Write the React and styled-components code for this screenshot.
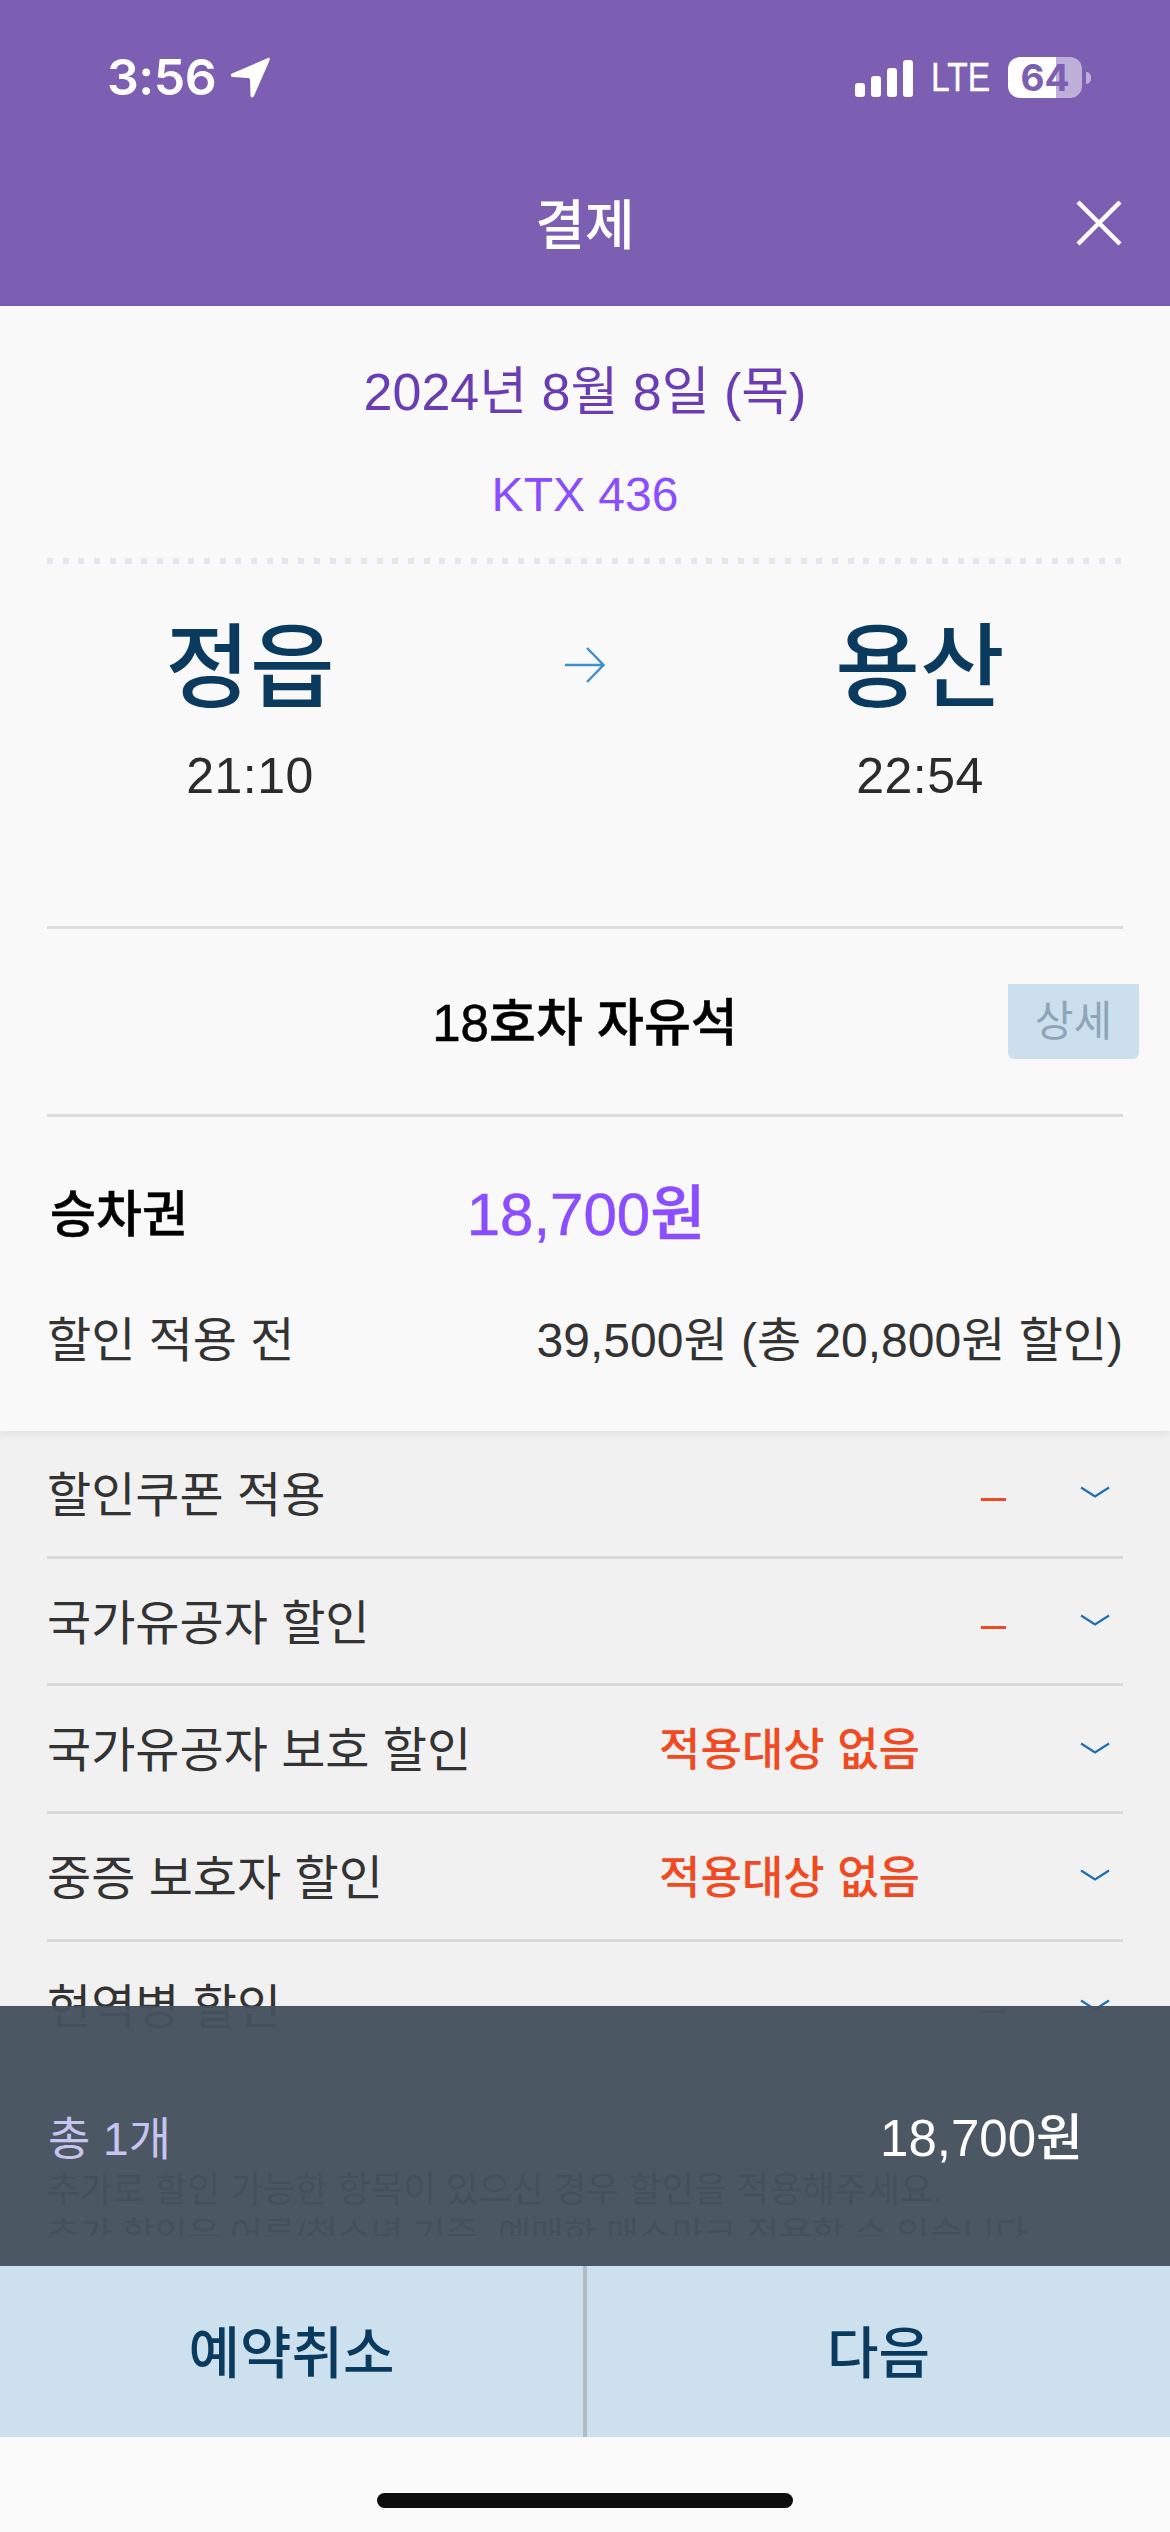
import React from "react";
import styled, { createGlobalStyle } from "styled-components";

const Global = createGlobalStyle`
  html, body { margin: 0; padding: 0; background: #f9f9f9; }
  * { box-sizing: border-box; }
  body { font-family: "Liberation Sans", "Noto Sans CJK KR", sans-serif; }
`;

const Page = styled.div`
  width: 1170px;
  height: 2532px;
  display: flex;
  flex-direction: column;
  overflow: hidden;
  background: #fafafa;
`;

const Header = styled.header`
  height: 306px;
  flex: none;
  background: #7c5eb2;
  color: #fff;
  display: flex;
  flex-direction: column;
`;

const StatusBar = styled.div`
  height: 186px;
  padding: 57px 79px 0 107px;
  display: flex;
  align-items: flex-start;
  justify-content: space-between;
`;

const StatusLeft = styled.div`
  display: flex;
  align-items: center;
  gap: 14px;
  height: 41px;
`;

const Clock = styled.span`
  font: 600 50px/41px Inter, sans-serif;
  letter-spacing: -0.5px;
`;

const StatusRight = styled.div`
  display: flex;
  align-items: center;
  height: 41px;
`;

const Signal = styled.div`
  display: flex;
  align-items: flex-end;
  gap: 6px;
  height: 37px;
  margin-top: 1px;
`;

const SignalBar = styled.span`
  width: 10px;
  height: ${(p) => p.$h}px;
  border-radius: 3px;
  background: #fff;
`;

const Network = styled.span`
  display: inline-block;
  width: 58px;
  margin: 0 19px 0 18px;
  font: 400 40px/41px "Liberation Sans", sans-serif;
  -webkit-text-stroke: 0.4px #fff;
  transform: scaleX(0.84);
  transform-origin: left center;
`;

const Battery = styled.div`
  width: 74px;
  height: 41px;
  border-radius: 12px;
  background: linear-gradient(to right, #fff 0 48px, rgba(255, 255, 255, 0.5) 48px);
  color: #7c5eb2;
  font: 700 37px/41px Inter, sans-serif;
  text-align: center;
`;

const BatteryCap = styled.span`
  width: 5px;
  height: 12px;
  margin-left: 4px;
  border-radius: 0 6px 6px 0;
  background: rgba(255, 255, 255, 0.5);
`;

const TitleBar = styled.div`
  height: 120px;
  position: relative;
  display: flex;
  align-items: flex-start;
  justify-content: center;
`;

const Title = styled.h1`
  margin: 0;
  font: 500 54px/66px "Liberation Sans", "Noto Sans CJK KR", sans-serif;
  padding-top: 7px;
`;

const Close = styled.svg`
  position: absolute;
  right: 48px;
  top: 14px;
  width: 46px;
  height: 46px;
`;

const Info = styled.section`
  flex: none;
  height: 1125px;
  background: #f9f9f9;
  padding: 56px 47px 0;
  position: relative;
  z-index: 1;
  box-shadow: 0 3px 8px rgba(0, 0, 0, 0.08);
`;

const DateLine = styled.div`
  font: 400 52px/60px "Liberation Sans", "Noto Sans CJK KR", sans-serif;
  color: #6a3db5;
  text-align: center;
`;

const TrainLine = styled.div`
  margin-top: 43px;
  font: 400 48px/60px "Liberation Sans", sans-serif;
  color: #8a4dff;
  text-align: center;
`;

const Dotted = styled.div`
  height: 6px;
  margin-top: ${(p) => p.$top}px;
  background: repeating-linear-gradient(to right, #e3e8f0 0 6px, transparent 6px 15.7px);
`;

const Route = styled.div`
  margin-top: 54px;
  display: grid;
  grid-template-columns: 406px 1fr 406px;
  align-items: start;
`;

const Stop = styled.div`
  display: flex;
  flex-direction: column;
  align-items: center;
  gap: 28px;
`;

const StationName = styled.div`
  font: 500 92px/100px "Liberation Sans", "Noto Sans CJK KR", sans-serif;
  color: #0a3a5e;
`;

const Time = styled.div`
  font: 400 50px/60px "Liberation Sans", sans-serif;
  letter-spacing: 0.5px;
  color: #2b2b2b;
`;

const ArrowWrap = styled.div`
  display: flex;
  justify-content: center;
  padding-top: 29px;
`;

const Rule = styled.div`
  height: 3px;
  background: #dcdcdc;
  margin-top: ${(p) => p.$top || 0}px;
`;

const SeatRow = styled.div`
  height: 185px;
  display: grid;
  grid-template-columns: 1fr auto 1fr;
  align-items: center;
`;

const SeatName = styled.div`
  grid-column: 2;
  font: 500 51px/60px "Liberation Sans", "Noto Sans CJK KR", sans-serif;
  -webkit-text-stroke: 0.5px #000;
  color: #000;
  padding-top: 4px;
`;

const DetailButton = styled.button`
  grid-column: 3;
  justify-self: end;
  width: 131px;
  height: 75px;
  margin: 0 -16px 0 0;
  padding: 0;
  border: 0;
  border-radius: 0 0 6px 6px;
  background: #cbdfed;
  color: #8ea5b8;
  font: 400 42px/75px "Liberation Sans", "Noto Sans CJK KR", sans-serif;
`;

const FareRow = styled.div`
  margin-top: 68px;
  display: grid;
  grid-template-columns: 1fr auto 1fr;
  align-items: center;
  height: 60px;
`;

const FareLabel = styled.div`
  font: 500 50px/60px "Liberation Sans", "Noto Sans CJK KR", sans-serif;
  -webkit-text-stroke: 0.5px #000;
  color: #000;
  padding-left: 3px;
`;

const FareAmount = styled.div`
  font: 500 60px/60px "Liberation Sans", "Noto Sans CJK KR", sans-serif;
  -webkit-text-stroke: 0.5px #8a4dff;
  color: #8a4dff;
  padding-left: 2px;
`;

const BeforeRow = styled.div`
  margin-top: 66px;
  height: 60px;
  display: flex;
  justify-content: space-between;
  align-items: center;
  color: #333;
  font: 400 48px/60px "Liberation Sans", "Noto Sans CJK KR", sans-serif;
`;

const Main = styled.main`
  flex: none;
  height: 835px;
  position: relative;
  background: #f1f1f1;
`;

const List = styled.div`
  height: 805px;
  padding: 0 47px;
  overflow: hidden;
`;

const Row = styled.div`
  height: 127.7px;
  display: flex;
  align-items: center;
  padding-top: 5px;
  border-bottom: ${(p) => (p.$last ? "0" : "3px solid #d9d9d9")};
`;

const RowLabel = styled.div`
  flex: 1;
  font: 400 48px/60px "Liberation Sans", "Noto Sans CJK KR", sans-serif;
  color: #333;
`;

const RowValue = styled.div`
  font: 500 45px/60px "Liberation Sans", "Noto Sans CJK KR", sans-serif;
  color: #f04a22;
  margin-right: ${(p) => (p.$dash ? 74 : 160)}px;
`;

const Chevron = styled.svg`
  flex: none;
  width: 30px;
  height: 12px;
  margin-right: 13px;
  margin-bottom: 7px;
`;

const Note = styled.p`
  margin: ${(p) => p.$top}px 0 0;
  font: 400 35.5px/52px "Liberation Sans", "Noto Sans CJK KR", sans-serif;
  color: #333;
  white-space: nowrap;
`;

const Summary = styled.div`
  position: absolute;
  left: 0;
  right: 0;
  bottom: 0;
  height: 260px;
  padding: 5px 87px 0 48px;
  display: flex;
  align-items: center;
  justify-content: space-between;
  background: rgba(69, 82, 93, 0.97);
`;

const SummaryCount = styled.div`
  font: 400 46px/60px "Liberation Sans", "Noto Sans CJK KR", sans-serif;
  color: #c7c4f2;
`;

const SummaryTotal = styled.div`
  font: 500 51px/60px "Liberation Sans", "Noto Sans CJK KR", sans-serif;
  color: #fff;
`;

const Footer = styled.footer`
  flex: none;
  height: 171px;
  display: grid;
  grid-template-columns: 1fr 4px 1fr;
  background: #cde0ee;
`;

const FooterSplit = styled.span`
  background: #b0bcc5;
`;

const FooterButton = styled.button`
  border: 0;
  padding: 5px 0 0;
  background: transparent;
  color: #0a3a5e;
  font: 500 56px/60px "Liberation Sans", "Noto Sans CJK KR", sans-serif;
`;

const HomeArea = styled.div`
  flex: 1;
  display: flex;
  justify-content: center;
  padding-top: 56px;
`;

const HomeBar = styled.span`
  width: 416px;
  height: 15px;
  border-radius: 8px;
  background: #0d0d0d;
`;

const rows = [
  { label: "할인쿠폰 적용", value: "–", dash: true },
  { label: "국가유공자 할인", value: "–", dash: true },
  { label: "국가유공자 보호 할인", value: "적용대상 없음" },
  { label: "중증 보호자 할인", value: "적용대상 없음" },
  { label: "현역병 할인", value: "–", dash: true, last: true },
];

const ChevronIcon = () => (
  <Chevron viewBox="0 0 30 12" fill="none">
    <path d="M1 1.500 L15 10.500 L29 1.500" stroke="#1a6fb5" strokeWidth="2.2" />
  </Chevron>
);

export default function App() {
  return (
    <Page>
      <Global />
      <Header>
        <StatusBar>
          <StatusLeft>
            <Clock>3:56</Clock>
            <svg width="40" height="41" viewBox="0 0 40 41">
              <path d="M38 1 C39.500 0.500 40 1.500 39.500 3.500 L24 39 C23 41 20.500 41 20.500 38.500 L20 23 C20 21.500 19 21 17.500 21 L3 20 C0.500 20 0 17.500 2 16.500 Z" fill="#fff" />
            </svg>
          </StatusLeft>
          <StatusRight>
            <Signal>
              <SignalBar $h={14} />
              <SignalBar $h={21} />
              <SignalBar $h={29} />
              <SignalBar $h={37} />
            </Signal>
            <Network>LTE</Network>
            <Battery>64</Battery>
            <BatteryCap />
          </StatusRight>
        </StatusBar>
        <TitleBar>
          <Title>결제</Title>
          <Close viewBox="0 0 46 46" fill="none">
            <path d="M2 2 L44 44 M44 2 L2 44" stroke="#fff" strokeWidth="4.5" />
          </Close>
        </TitleBar>
      </Header>
      <Info>
        <DateLine>2024년 8월 8일 (목)</DateLine>
        <TrainLine>KTX 436</TrainLine>
        <Dotted $top={33} />
        <Route>
          <Stop>
            <StationName>정읍</StationName>
            <Time>21:10</Time>
          </Stop>
          <ArrowWrap>
            <svg width="40" height="36" viewBox="0 0 40 36" fill="none">
              <path d="M0 18 H38 M22 1 L38.500 18 L22 35" stroke="#3f8fc9" strokeWidth="2.5" />
            </svg>
          </ArrowWrap>
          <Stop>
            <StationName>용산</StationName>
            <Time>22:54</Time>
          </Stop>
        </Route>
        <Rule $top={120} />
        <SeatRow>
          <SeatName>18호차 자유석</SeatName>
          <DetailButton>상세</DetailButton>
        </SeatRow>
        <Rule />
        <FareRow>
          <FareLabel>승차권</FareLabel>
          <FareAmount>18,700원</FareAmount>
        </FareRow>
        <BeforeRow>
          <span>할인 적용 전</span>
          <span>39,500원 (총 20,800원 할인)</span>
        </BeforeRow>
      </Info>
      <Main>
        <List>
          {rows.map((r) => (
            <Row key={r.label} $last={r.last}>
              <RowLabel>{r.label}</RowLabel>
              <RowValue $dash={r.dash}>{r.value}</RowValue>
              <ChevronIcon />
            </Row>
          ))}
          <Dotted $top={0} />
          <Note $top={89}>추가로 할인 가능한 항목이 있으신 경우 할인을 적용해주세요.</Note>
          <Note $top={-7}>추가 할인은 어른/청소년 기준, 예매한 매스마크 적용할 수 있습니다</Note>
        </List>
        <Summary>
          <SummaryCount>총 1개</SummaryCount>
          <SummaryTotal>18,700원</SummaryTotal>
        </Summary>
      </Main>
      <Footer>
        <FooterButton>예약취소</FooterButton>
        <FooterSplit />
        <FooterButton>다음</FooterButton>
      </Footer>
      <HomeArea>
        <HomeBar />
      </HomeArea>
    </Page>
  );
}
